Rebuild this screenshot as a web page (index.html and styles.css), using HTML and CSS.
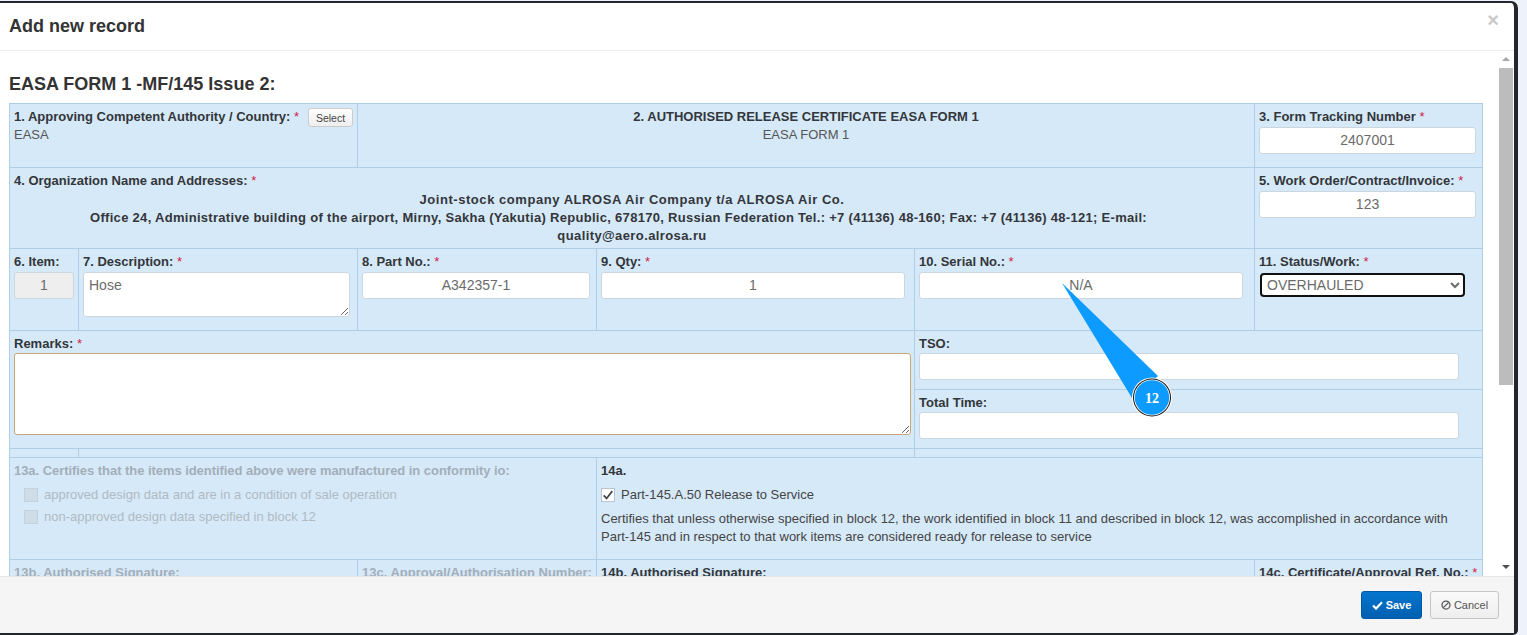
FILE: index.html
```html
<!DOCTYPE html>
<html lang="en">
<head>
<meta charset="utf-8">
<title>Add new record</title>
<link rel="stylesheet" href="styles.css">
</head>
<body>
<div class="modal">
  <header class="modal-header">
    <h3 class="modal-title">Add new record</h3>
    <span class="close">×</span>
  </header>
  <div class="modal-body">
    <div class="scroll-content">
      <h4 class="form-title">EASA FORM 1 -MF/145 Issue 2:</h4>
      <table class="form-table">
        <colgroup>
          <col class="c1"><col class="c2"><col class="c3"><col class="c4"><col class="c5"><col class="c6">
        </colgroup>
        <tr class="r1">
          <td colspan="2">
            <div class="label-row"><span class="lbl">1. Approving Competent Authority / Country: <i>*</i></span><button class="btn-select">Select</button></div>
            <div class="val">EASA</div>
          </td>
          <td colspan="3" class="center">
            <div class="lbl">2. AUTHORISED RELEASE CERTIFICATE EASA FORM 1</div>
            <div class="val">EASA FORM 1</div>
          </td>
          <td>
            <div class="lbl">3. Form Tracking Number <i>*</i></div>
            <input class="ctl w-217" value="2407001">
          </td>
        </tr>
        <tr class="r2">
          <td colspan="5">
            <div class="lbl">4. Organization Name and Addresses: <i>*</i></div>
            <div class="org">
              <div class="org-a">Joint-stock company ALROSA Air Company t/a ALROSA Air Co.</div>
              <div class="org-b">Office 24, Administrative building of the airport, Mirny, Sakha (Yakutia) Republic, 678170, Russian Federation Tel.: +7 (41136) 48-160; Fax: +7 (41136) 48-121; E-mail:</div>
              <div class="org-c">quality@aero.alrosa.ru</div>
            </div>
          </td>
          <td>
            <div class="lbl">5. Work Order/Contract/Invoice: <i>*</i></div>
            <input class="ctl w-217" value="123">
          </td>
        </tr>
        <tr class="r3">
          <td>
            <div class="lbl">6. Item:</div>
            <input class="ctl item" value="1" disabled>
          </td>
          <td>
            <div class="lbl">7. Description: <i>*</i></div>
            <textarea class="ctl desc">Hose</textarea>
          </td>
          <td>
            <div class="lbl">8. Part No.: <i>*</i></div>
            <input class="ctl part" value="A342357-1">
          </td>
          <td>
            <div class="lbl">9. Qty: <i>*</i></div>
            <input class="ctl qty" value="1">
          </td>
          <td>
            <div class="lbl">10. Serial No.: <i>*</i></div>
            <input class="ctl serial" value="N/A">
          </td>
          <td>
            <div class="lbl">11. Status/Work: <i>*</i></div>
            <select class="ctl status"><option>OVERHAULED</option></select>
          </td>
        </tr>
        <tr class="r4a">
          <td colspan="4" rowspan="2">
            <div class="lbl">Remarks: <i>*</i></div>
            <textarea class="ctl remarks"></textarea>
          </td>
          <td colspan="2">
            <div class="lbl">TSO:</div>
            <input class="ctl wide">
          </td>
        </tr>
        <tr class="r4b">
          <td colspan="2">
            <div class="lbl">Total Time:</div>
            <input class="ctl wide">
          </td>
        </tr>
        <tr class="r5">
          <td></td>
          <td colspan="3"></td>
          <td colspan="2"></td>
        </tr>
        <tr class="r6">
          <td colspan="3" class="muted">
            <div class="lbl lbl-tight">13a. Certifies that the items identified above were manufactured in conformity io:</div>
            <div class="check-row first"><span class="box off"></span>approved design data and are in a condition of sale operation</div>
            <div class="check-row"><span class="box off"></span>non-approved design data specified in block 12</div>
          </td>
          <td colspan="3">
            <div class="lbl">14a.</div>
            <div class="check-row first on"><span class="box"><svg viewBox="0 0 14 14" width="12" height="12"><path d="M2 7.5 5.3 11 12 2.5" fill="none" stroke="#444" stroke-width="2"/></svg></span>Part-145.A.50 Release to Service</div>
            <div class="para">Certifies that unless otherwise specified in block 12, the work identified in block 11 and described in block 12, was accomplished in accordance with<br>Part-145 and in respect to that work items are considered ready for release to service</div>
          </td>
        </tr>
        <tr class="r7">
          <td colspan="2" class="muted"><div class="lbl">13b. Authorised Signature:</div></td>
          <td class="muted"><div class="lbl">13c. Approval/Authorisation Number:</div></td>
          <td colspan="2"><div class="lbl">14b. Authorised Signature:</div></td>
          <td><div class="lbl">14c. Certificate/Approval Ref. No.: <i>*</i></div></td>
        </tr>
      </table>
    </div>
    <div class="scrollbar">
      <span class="arrow up"></span>
      <span class="thumb"></span>
      <span class="track"></span>
      <span class="arrow down"></span>
    </div>
  </div>
  <footer class="modal-footer">
    <button class="btn btn-save"><svg viewBox="0 0 12 10" width="11" height="9"><path d="M1 5 4.4 8.4 11 1.5" fill="none" stroke="#fff" stroke-width="2.4"/></svg>Save</button>
    <button class="btn btn-cancel"><svg viewBox="0 0 12 12" width="10" height="10"><circle cx="6" cy="6" r="4.8" fill="none" stroke="#555" stroke-width="1.5"/><path d="M2.8 9.2 9.2 2.8" stroke="#555" stroke-width="1.5"/></svg>Cancel</button>
  </footer>
</div>
<svg class="callout" viewBox="0 0 130 150" width="130" height="150">
  <path d="M2 3 72 118 98 96Z" fill="#0d9bff"/>
  <circle cx="92" cy="117.5" r="20" fill="#fff"/>
  <circle cx="92" cy="117.5" r="19" fill="#111"/>
  <circle cx="92" cy="117.5" r="18" fill="#fff"/>
  <circle cx="92" cy="117.5" r="17.2" fill="#0d9bff"/>
  <text x="92" y="122.5" class="callout-text" text-anchor="middle">12</text>
</svg>
</body>
</html>
```
FILE: styles.css
```css
* { box-sizing: border-box; }
html, body { margin: 0; height: 635px; overflow: hidden; }
body {
  background: #eef3fb;
  padding-top: 1px;
  font-family: "Liberation Sans", Arial, sans-serif;
  font-size: 13px;
  color: #333;
  position: relative;
}
.modal {
  width: 1518px;
  height: 634px;
  background: #fff;
  border-top: 2px solid #23262b;
  border-right: 4px solid #23262b;
  border-bottom: 2px solid #23262b;
  border-radius: 0 7px 5px 0;
  display: flex;
  flex-direction: column;
}
.modal-header {
  height: 48px;
  flex: none;
  border-bottom: 1px solid #eeeeee;
  display: flex;
  align-items: center;
  justify-content: space-between;
  padding: 0 15px 1px 9px;
}
.modal-title { margin: 0; font-size: 18px; font-weight: bold; color: #333; }
.close { color: #c9c9c9; font-size: 20px; font-weight: bold; margin-bottom: 12px; }
.modal-body { flex: 1; min-height: 0; display: flex; }
.scroll-content { flex: 1; min-width: 0; overflow: hidden; padding-left: 9px; }
.form-title { margin: 24px 0 9px; font-size: 18px; line-height: 19px; font-weight: bold; color: #333; }
.form-table { border-collapse: collapse; table-layout: fixed; width: 1473px; }
.c1 { width: 69px; } .c2 { width: 279px; } .c3 { width: 239px; }
.c4 { width: 318px; } .c5 { width: 340px; } .c6 { width: 228px; }
.form-table td {
  background: #d6e9f8;
  border: 1px solid #aecde6;
  padding: 4px 4px 0;
  vertical-align: top;
}
.r1 { height: 64px; } .r2 { height: 81px; } .r3 { height: 82px; }
.r4a { height: 59px; } .r4b { height: 59px; } .r5 { height: 9px; }
.r6 { height: 102px; } .r7 { height: 60px; }
.form-table .r5 td { padding: 0; }
.lbl { line-height: 18px; color: #33363a; font-weight: bold; font-size: 13px; }
.lbl i { color: #d0224b; font-style: normal; font-weight: normal; }
.lbl-tight { letter-spacing: -0.05px; }
.label-row { display: flex; align-items: flex-start; height: 18px; }
.label-row .lbl { width: 294px; flex: none; }
.btn-select {
  height: 19px; width: 45px; padding: 0;
  font: 10.5px "Liberation Sans", Arial, sans-serif; color: #444;
  background: linear-gradient(#fff, #eee);
  border: 1px solid #ccc; border-radius: 3px;
  flex: none;
}
.val { line-height: 18px; color: #555; }
.center { text-align: center; }
.org { text-align: center; line-height: 18px; margin-top: 1px; color: #33363a; font-weight: bold; }
.org-a { letter-spacing: 0.55px; }
.org-b { letter-spacing: 0.3px; padding-right: 27px; }
.org-c { letter-spacing: 0.4px; }
.ctl {
  display: block;
  font: 14px "Liberation Sans", Arial, sans-serif;
  color: #6b6b6b;
  background: #fff;
  border: 1px solid #ccd6df;
  border-radius: 3px;
  height: 27px;
  margin-top: 1px;
  padding: 0 5px 1px;
  text-align: center;
  outline: none;
}
.w-217 { width: 217px; }
.item { width: 60px; background: #eee; }
.desc { width: 267px; height: 45px; text-align: left; padding: 4px 5px; resize: both; }
.part { width: 228px; }
.qty { width: 304px; }
.serial { width: 324px; }
.status { width: 205px; height: 24px; margin-left: 1px; margin-top: 2px; text-align: left; padding: 0 1px; border: 2px solid #111; border-radius: 4px; }
.remarks { width: 897px; height: 82px; margin-top: 0; border-color: #c4a774; resize: both; }
.wide { width: 540px; margin-top: 0; }
.muted { color: #a3aeb8; }
.muted .lbl { color: #a3aeb8; }
.check-row { display: flex; align-items: center; line-height: 18px; padding-left: 10px; margin-top: 4px; color: #b0bac3; }
.check-row.first { margin-top: 6px; }
.check-row.on { padding-left: 0; color: #444; }
.box {
  width: 14px; height: 14px; margin-right: 6px; flex: none;
  border: 1px solid #b9c4cc; background: #fff;
  display: flex; align-items: center; justify-content: center;
}
.box.off { background: #cfdde9; border-color: #c2d2de; }
.para { line-height: 18px; margin-top: 6px; color: #444; }
.scrollbar { width: 15px; flex: none; display: flex; flex-direction: column; }
.arrow { width: 14px; height: 17px; flex: none; position: relative; }
.arrow::after {
  content: ""; position: absolute; left: 3px; top: 6px;
  border-left: 4px solid transparent; border-right: 4px solid transparent;
}
.arrow.up::after { border-bottom: 4px solid #a8a8a8; }
.arrow.down::after { border-top: 4px solid #505050; }
.thumb { width: 14px; height: 317px; background: #bcbcbc; flex: none; }
.track { flex: 1; }
.modal-footer {
  height: 57px;
  flex: none;
  background: #f5f5f5;
  border-top: 1px solid #e5e5e5;
  display: flex;
  justify-content: flex-end;
  align-items: flex-start;
  gap: 8px;
  padding: 14px 15px 0 0;
}
.btn {
  height: 28px; border-radius: 3px;
  font: 11px "Liberation Sans", Arial, sans-serif;
  display: flex; align-items: center; justify-content: center; gap: 3px; padding: 0;
}
.btn-save { width: 61px; background: linear-gradient(#0575ce, #005fb0); color: #fff; border: 1px solid #0059a6; font-weight: bold; }
.btn-cancel { width: 69px; background: linear-gradient(#fafafa, #eeeeee); color: #555; border: 1px solid #c6c6c6; }
.callout { position: absolute; left: 1060px; top: 280px; }
.callout-text { font: bold 14px "Liberation Serif", serif; fill: #fff; }
```
